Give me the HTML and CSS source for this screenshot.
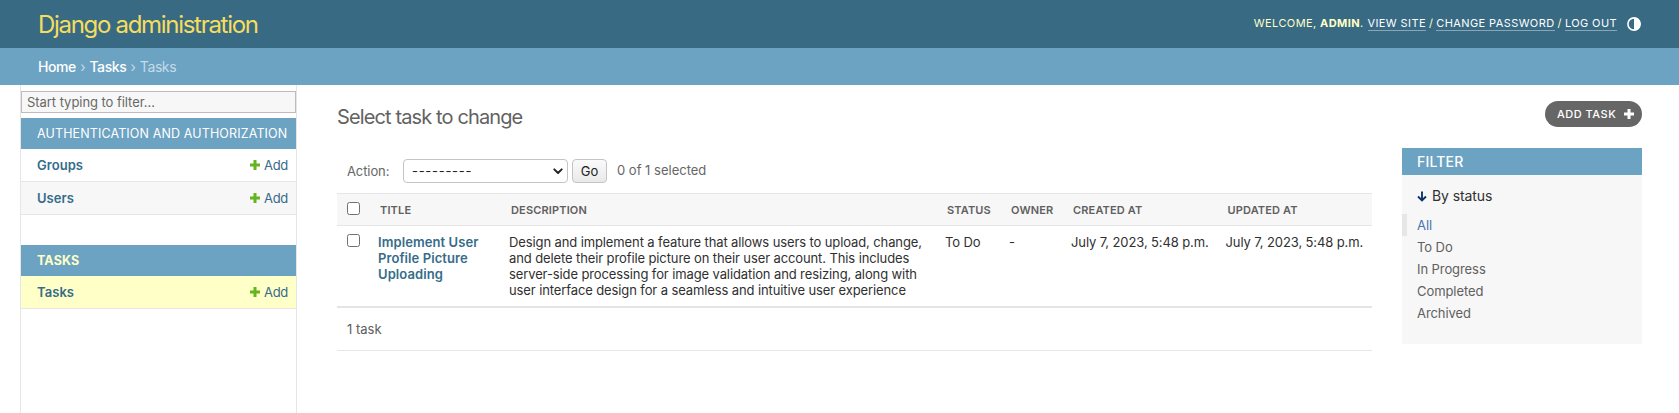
FILE: index.html
```html
<!DOCTYPE html>
<html lang="en">
<head>
<meta charset="utf-8">
<title>Select task to change | Django site admin</title>
<link rel="stylesheet" href="styles.css">
</head>
<body>
<header class="header">
  <h1 class="brand">Django administration</h1>
  <div class="user-tools">
    <span class="welcome">Welcome, <strong>admin</strong>.</span>
    <a class="tool view">View site</a><span class="sep">/</span><a class="tool change">Change password</a><span class="sep">/</span><a class="tool out">Log out</a>
    <svg class="theme-icon" viewBox="0 0 14 14"><circle cx="7" cy="7" r="6.1" fill="none" stroke="#fff" stroke-width="1.6"/><path d="M7 .5a6.5 6.5 0 0 1 0 13z" fill="#fff"/></svg>
  </div>
</header>
<nav class="breadcrumbs"><a>Home</a><span>›</span><a>Tasks</a><span>›</span><span class="current">Tasks</span></nav>
<div class="main">
  <aside class="sidebar">
    <input class="nav-filter" type="text" placeholder="Start typing to filter…">
    <section class="module">
      <h2 class="caption">Authentication and Authorization</h2>
      <div class="model"><a class="name">Groups</a><a class="add"><svg viewBox="0 0 10 10"><path d="M3.5 0h3v3.500H10v3H6.500V10h-3V6.500H0v-3h3.500z"/></svg>Add</a></div>
      <div class="model alt"><a class="name">Users</a><a class="add"><svg viewBox="0 0 10 10"><path d="M3.5 0h3v3.500H10v3H6.500V10h-3V6.500H0v-3h3.500z"/></svg>Add</a></div>
    </section>
    <section class="module">
      <h2 class="caption active">Tasks</h2>
      <div class="model selected"><a class="name">Tasks</a><a class="add"><svg viewBox="0 0 10 10"><path d="M3.5 0h3v3.500H10v3H6.500V10h-3V6.500H0v-3h3.500z"/></svg>Add</a></div>
    </section>
  </aside>
  <main class="content">
    <div class="title-row">
      <h1 class="page-title">Select task to change</h1>
      <a class="add-task">Add task<svg viewBox="0 0 10 10"><path d="M3.5 0h3v3.500H10v3H6.500V10h-3V6.500H0v-3h3.500z"/></svg></a>
    </div>
    <div class="changelist">
      <div class="results">
        <div class="actions">
          <span class="label">Action:</span>
          <div class="select"><span>---------</span><svg viewBox="0 0 10 7"><path d="M1.300 1.300 5 5l3.700-3.700" fill="none" stroke="#222" stroke-width="1.900" stroke-linecap="round" stroke-linejoin="round"/></svg></div>
          <button class="go">Go</button>
          <span class="counter">0 of 1 selected</span>
        </div>
        <div class="row head">
          <div><span class="check"></span></div><div>Title</div><div>Description</div><div>Status</div><div>Owner</div><div>Created at</div><div>Updated at</div>
        </div>
        <div class="row body">
          <div><span class="check"></span></div>
          <div><a class="task">Implement User<br>Profile Picture<br>Uploading</a></div>
          <div>Design and implement a feature that allows users to upload, change,<br>and delete their profile picture on their user account. This includes<br>server-side processing for image validation and resizing, along with<br>user interface design for a seamless and intuitive user experience</div>
          <div>To Do</div><div>-</div><div>July 7, 2023, 5:48 p.m.</div><div>July 7, 2023, 5:48 p.m.</div>
        </div>
        <p class="paginator">1 task</p>
      </div>
      <aside class="filter">
        <h2>Filter</h2>
        <h3><svg viewBox="0 0 10 11"><path d="M5 .5v9M1 5.500l4 4 4-4" fill="none" stroke="#0c3566" stroke-width="1.900"/></svg>By status</h3>
        <ul>
          <li class="selected">All</li><li>To Do</li><li>In Progress</li><li>Completed</li><li>Archived</li>
        </ul>
      </aside>
    </div>
  </main>
</div>
</body>
</html>
```

FILE: styles.css
```css
* { box-sizing: border-box; }
body {
  margin: 0;
  height: 413px;
  overflow: hidden;
  display: flex;
  flex-direction: column;
  background: #fff;
  color: #303030;
  font: 13px/16px Inter, "Liberation Sans", sans-serif;
}
h1, h2, h3, p, ul { margin: 0; padding: 0; font-weight: 400; }
ul { list-style: none; }

.header {
  flex: none;
  height: 48px;
  padding: 0 38px;
  display: flex;
  align-items: center;
  justify-content: space-between;
  background: #396a84;
  color: #ffffc8;
}
.brand { font-size: 24px; line-height: 30px; letter-spacing: -1.3px; color: #f5dd5d; padding-top: 1px; }
.user-tools {
  display: flex;
  align-items: center;
  font-size: 11px;
  line-height: 13px;
  letter-spacing: 0.4px;
  text-transform: uppercase;
  padding-bottom: 1px;
}
.tool { color: #fff; border-bottom: 1px solid #88a6b5; margin-top: 1px; }
.view { margin-left: 4px; }
.sep { margin: 0 3px; }
.theme-icon { width: 14px; height: 14px; margin-left: 10px; margin-top: 1px; }

.breadcrumbs {
  flex: none;
  height: 37px;
  padding: 1px 38px 0;
  display: flex;
  align-items: center;
  gap: 4.300px;
  background: #6ca2c2;
  color: #c4dce8;
  font-size: 14px;
  letter-spacing: -0.42px;
}
.breadcrumbs a { color: #fff; font-weight: 500; }

.main { flex: 1; display: flex; }
.sidebar {
  flex: none;
  width: 277px;
  margin-left: 20px;
  padding-top: 6px;
  border: solid #e6e6e6;
  border-width: 0 1px;
}
.nav-filter {
  display: block;
  width: 275px;
  height: 22px;
  margin-bottom: 5px;
  padding: 0 5px;
  border: 1px solid #bcbcbc;
  border-radius: 0;
  background: #f7f7f7;
  font: 13px/16px Inter, sans-serif;
  letter-spacing: -0.05px;
}
.nav-filter::placeholder { color: #686868; opacity: 1; }
.module { margin-bottom: 30px; }
.caption {
  height: 31px;
  padding: 0 16px;
  background: #6ca2c2;
  color: #fff;
  font-size: 12.500px;
  line-height: 32px;
  letter-spacing: 0.13px;
  text-transform: uppercase;
  white-space: nowrap;
}
.caption.active { color: #ffffc8; font-weight: 700; }
.model {
  height: 33px;
  padding: 0 8px 0 16px;
  display: flex;
  align-items: center;
  justify-content: space-between;
  border-bottom: 1px solid #e6e6e6;
  color: #36698a;
}
.alt { background: #f7f7f7; }
.model.selected { background: #ffffc8; }
.name, .task { font-weight: 600; color: #366c89; }
.name { letter-spacing: 0.05px; }
.task { letter-spacing: 0.08px; }
.add { display: flex; align-items: center; gap: 4px; letter-spacing: -0.3px; }
.add svg { width: 10px; height: 10px; fill: #64b321; margin-top: -1px; }

.content { flex: 1; padding: 16px 37px 0 40px; }
.title-row { display: flex; justify-content: space-between; height: 47px; }
.page-title { font-size: 20px; line-height: 26px; color: #626262; padding-top: 3px; letter-spacing: -0.88px; }
.add-task {
  width: 97px;
  height: 26px;
  padding: 0 8px 0 12px;
  display: flex;
  align-items: center;
  justify-content: space-between;
  border-radius: 13px;
  background: #666;
  color: #fff;
  font-size: 11px;
  font-weight: 500;
  letter-spacing: 0.5px;
  text-transform: uppercase;
}
.add-task svg { width: 10px; height: 10px; fill: #fff; }
.changelist { display: flex; gap: 30px; align-items: flex-start; }
.results { flex: 1; }
.actions { height: 45px; padding: 11px 10px 0; display: flex; color: #666; }
.actions .label { width: 56px; padding-top: 4px; letter-spacing: -0.1px; }
.select {
  width: 165px;
  height: 24px;
  padding: 0 4px 0 8px;
  display: flex;
  align-items: center;
  justify-content: space-between;
  border: 1px solid #c4c4c4;
  border-radius: 4px;
  color: #222;
}
.select span { letter-spacing: 0.7px; }
.select svg { width: 10px; height: 7px; }
.go {
  width: 35px;
  height: 24px;
  margin: 0 10px 0 4px;
  padding: 0;
  border: 1px solid #c4c4c4;
  border-radius: 4px;
  background: linear-gradient(#fafafa, #e9e9e9);
  color: #222;
  font: 13px/16px Inter, sans-serif;
}
.counter { padding-top: 3px; }
.row { display: grid; grid-template-columns: 33px 131px 436px 64px 62px 154.5px 154.5px; }
.head {
  height: 33px;
  border: solid #e6e6e6;
  border-width: 1px 0;
  background: #f7f7f7;
  color: #606060;
  font-size: 11px;
  line-height: 33px;
  font-weight: 600;
  letter-spacing: 0.15px;
  text-transform: uppercase;
}
.head > div { padding-left: 10px; white-space: nowrap; }
.body { height: 82px; padding-top: 8px; border-bottom: 2px solid #e4e4e4; letter-spacing: -0.11px; }
.body > div { padding-left: 8px; white-space: nowrap; }
.check {
  display: block;
  width: 13px;
  height: 13px;
  border: 1px solid #707070;
  border-radius: 2.500px;
  background: #fff;
}
.head .check { margin-top: 8px; }
.body .check { margin: 0 0 0 2px; }
.paginator { height: 43px; padding: 13px 10px 0; border-bottom: 1px solid #e6e6e6; color: #606060; }

.filter { flex: none; width: 240px; height: 196px; background: #f7f7f7; }
.filter h2 {
  height: 27px;
  padding-left: 15px;
  background: #6ca2c2;
  color: #fff;
  font-size: 14px;
  font-weight: 500;
  line-height: 28px;
  letter-spacing: 0.2px;
  text-transform: uppercase;
}
.filter h3 { padding: 13px 15px 10px; display: flex; align-items: center; gap: 5px; font-size: 14px; letter-spacing: -0.1px; }
.filter h3 svg { width: 10px; height: 11px; }
.filter li { height: 22px; padding-left: 15px; line-height: 22px; letter-spacing: -0.08px; color: #606060; }
.filter li.selected { padding-left: 10px; border-left: 5px solid #e6e6e6; color: #4a73b0; }
```
